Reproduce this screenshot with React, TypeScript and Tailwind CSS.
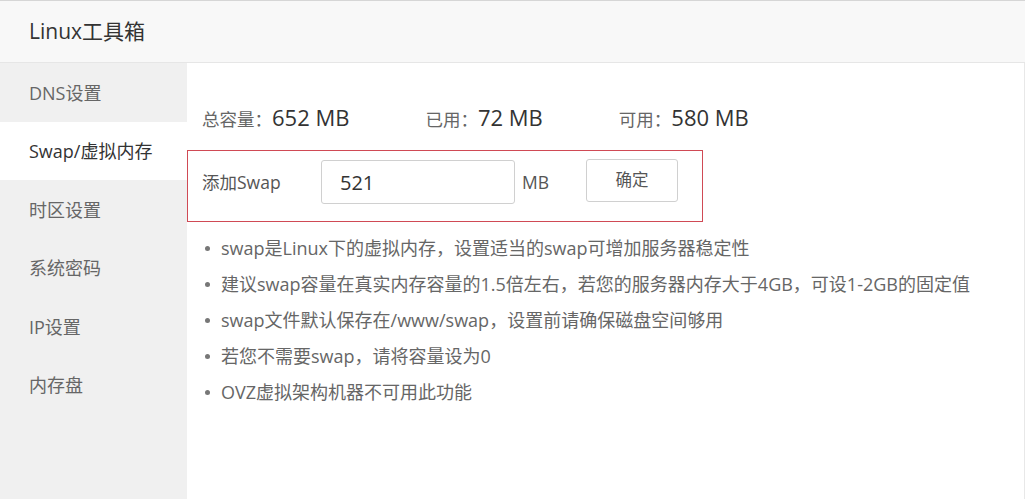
import React, { useState } from 'react';

const menuItems = ['DNS设置', 'Swap/虚拟内存', '时区设置', '系统密码', 'IP设置', '内存盘'];

const tips = [
  'swap是Linux下的虚拟内存，设置适当的swap可增加服务器稳定性',
  '建议swap容量在真实内存容量的1.5倍左右，若您的服务器内存大于4GB，可设1-2GB的固定值',
  'swap文件默认保存在/www/swap，设置前请确保磁盘空间够用',
  '若您不需要swap，请将容量设为0',
  'OVZ虚拟架构机器不可用此功能',
];

const stats = [
  { label: '总容量：', value: '652 MB' },
  { label: '已用：', value: '72 MB' },
  { label: '可用：', value: '580 MB' },
];

export default function App() {
  const [active, setActive] = useState(1);
  const [size, setSize] = useState('521');

  return (
    <div className="w-[1025px] h-[499px] overflow-hidden bg-white font-['Open_Sans','Noto_Sans_CJK_SC',sans-serif] border-t border-[#d6d6d6] flex flex-col">
      {/* header */}
      <div className="h-[62px] shrink-0 bg-[#f8f8f8] border-b border-[#e6e6e6] flex items-center px-[29px]">
        <span className="text-[21px] text-[#333]">Linux工具箱</span>
      </div>

      <div className="flex flex-1 min-h-0">
        {/* sidebar */}
        <div className="w-[187px] shrink-0 bg-[#f0f0f0]">
          {menuItems.map((item, i) => (
            <div
              key={item}
              onClick={() => setActive(i)}
              className={
                i === active
                  ? 'h-[58.5px] flex items-center pl-[29px] pt-[2px] bg-white text-[18px] text-[#333] cursor-pointer'
                  : 'h-[58.5px] flex items-center pl-[29px] pt-[2px] text-[18px] text-[#666] cursor-pointer'
              }
            >
              {item}
            </div>
          ))}
        </div>

        {/* content */}
        <div className="flex-1 border-r border-[#e8e8e8] pt-[38px]">
          <div className="flex items-baseline pl-[15px] h-[30px]">
            {stats.map((s) => (
              <div key={s.label} className="flex items-baseline mr-[76px]">
                <span className="text-[17.5px] text-[#666]">{s.label}</span>
                <span className="text-[22px] text-[#333]">{s.value}</span>
              </div>
            ))}
          </div>

          <div className="mt-[19px] w-[516px] h-[72px] border border-[#d04a55] flex items-center pl-[14px] pb-[8px]">
            <span className="w-[119px] shrink-0 text-[17.5px] text-[#555]">添加Swap</span>
            <input
              value={size}
              onChange={(e) => setSize(e.target.value)}
              className="w-[194px] h-[44px] border border-[#d0d0d0] rounded-[3px] px-[18px] text-[20px] text-[#333] outline-none"
            />
            <span className="ml-[7px] w-[64px] text-[17.5px] text-[#555]">MB</span>
            <button className="w-[92px] h-[43px] -mt-[3px] border border-[#d0d0d0] rounded-[3px] bg-white text-[16.5px] text-[#555]">
              确定
            </button>
          </div>

          <ul className="mt-[8px] pl-[18px]">
            {tips.map((t) => (
              <li key={t} className="h-[36px] flex items-center text-[18px] text-[#666]">
                <span className="w-[5px] h-[5px] rounded-full bg-[#777] mr-[11px] shrink-0" />
                {t}
              </li>
            ))}
          </ul>
        </div>
      </div>
    </div>
  );
}
